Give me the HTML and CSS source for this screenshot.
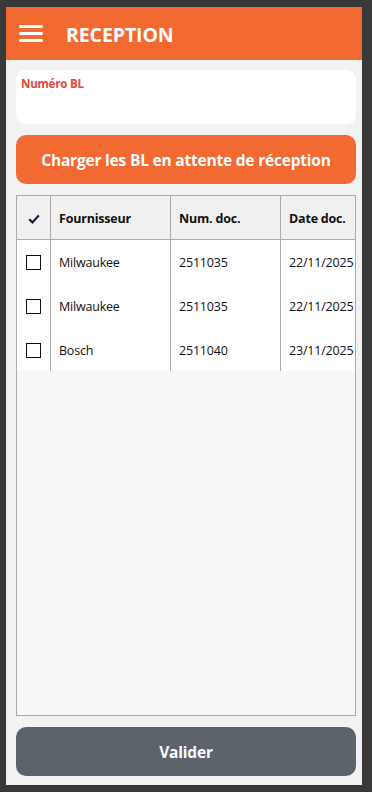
FILE: index.html
```html
<!DOCTYPE html>
<html lang="fr">
<head>
    <meta charset="UTF-8">
    <meta name="viewport" content="width=device-width, initial-scale=1.0">
    <title>Reception</title>
    <link rel="stylesheet" href="styles.css">
</head>
<body>
    <div class="app">
        <header class="topbar">
            <svg class="menu-icon" width="24" height="17" viewBox="0 0 24 17">
                <path d="M1.5 1.5h21M1.5 8.5h21M1.5 15.5h21" stroke="#fff" stroke-width="3" stroke-linecap="round"/>
            </svg>
            <h1>RECEPTION</h1>
        </header>

        <main class="content">
            <div class="field">
                <label for="numero-bl">Numéro BL</label>
                <input type="text" id="numero-bl" name="numero-bl">
            </div>

            <button class="btn btn-load" type="button">Charger les BL en attente de réception</button>

            <div class="grid-wrap">
                <table class="grid">
                    <thead>
                        <tr>
                            <th class="col-check">
                                <svg width="12" height="10" viewBox="0 0 12 10">
                                    <path d="M1.2 5.2l3.2 3.2L10.8 1.6" fill="none" stroke="#14213d" stroke-width="2.2"/>
                                </svg>
                            </th>
                            <th class="col-supplier">Fournisseur</th>
                            <th class="col-num">Num. doc.</th>
                            <th class="col-date">Date doc.</th>
                        </tr>
                    </thead>
                    <tbody>
                        <tr>
                            <td class="col-check"><span class="box"></span></td>
                            <td>Milwaukee</td>
                            <td>2511035</td>
                            <td>22/11/2025</td>
                        </tr>
                        <tr>
                            <td class="col-check"><span class="box"></span></td>
                            <td>Milwaukee</td>
                            <td>2511035</td>
                            <td>22/11/2025</td>
                        </tr>
                        <tr>
                            <td class="col-check"><span class="box"></span></td>
                            <td>Bosch</td>
                            <td>2511040</td>
                            <td>23/11/2025</td>
                        </tr>
                    </tbody>
                </table>
            </div>

            <button class="btn btn-validate" type="button">Valider</button>
        </main>
    </div>
</body>
</html>
```

FILE: styles.css
```css
html, body {
    margin: 0;
    height: 100%;
}
body {
    background-color: #393939;
    font-family: "Open Sans", "Noto Sans", sans-serif;
    padding: 7px 10px 7px 6px;
    box-sizing: border-box;
}
.app {
    width: 356px;
    height: 778px;
    background-color: #f2f2f2;
    display: flex;
    flex-direction: column;
}
.topbar {
    height: 53px;
    background-color: #f26a32;
    display: flex;
    align-items: center;
    padding-left: 13px;
    gap: 23px;
    flex-shrink: 0;
}
.menu-icon {
    display: block;
}
.topbar h1 {
    margin: 0;
    padding-top: 2px;
    color: #fff;
    font-size: 19.5px;
    font-weight: 700;
    letter-spacing: -0.1px;
}
.content {
    flex: 1;
    display: flex;
    flex-direction: column;
    padding: 10px 6px 9px 10px;
    gap: 11px;
    min-height: 0;
}
.field {
    background-color: #fff;
    border-radius: 9px;
    height: 54px;
    padding: 6px 5px 0;
    box-sizing: border-box;
    display: flex;
    flex-direction: column;
}
.field label {
    color: #e9483b;
    font-size: 11.5px;
    font-weight: 700;
    line-height: 15px;
    letter-spacing: -0.2px;
}
.field input {
    border: none;
    outline: none;
    background: transparent;
    font: inherit;
    font-size: 13px;
    padding: 4px 0;
}
.btn {
    display: block;
    width: 100%;
    height: 49px;
    border: none;
    border-radius: 10px;
    color: #fff;
    font-family: inherit;
    font-size: 15.5px;
    font-weight: 700;
    letter-spacing: -0.2px;
    padding-top: 2px;
    flex-shrink: 0;
}
.btn-load {
    background-color: #f26a32;
}
.btn-validate {
    background-color: #5c636a;
}
.grid-wrap {
    flex: 1;
    border: 1px solid #ababab;
    background-color: #f7f7f7;
    overflow: hidden;
}
.grid {
    border-collapse: collapse;
    table-layout: fixed;
    width: 390px;
    font-size: 12.5px;
    color: #111;
}
.grid th, .grid td {
    text-align: left;
    padding: 3px 8px 0;
    white-space: nowrap;
    border-left: 1px solid #ababab;
}
.grid th:first-child, .grid td:first-child {
    border-left: none;
}
.grid thead tr {
    height: 43px;
    background-color: #f0f0f0;
    border-bottom: 1px solid #ababab;
}
.grid th {
    font-weight: 700;
    letter-spacing: -0.2px;
}
.grid tbody tr {
    height: 44px;
    background-color: #fff;
}
.grid td {
    letter-spacing: -0.2px;
}
.grid .col-check {
    width: 33px;
    padding: 0;
    text-align: center;
}
.col-check svg {
    display: block;
    margin: 3px auto 0;
}
.col-supplier {
    width: 103px;
}
.col-num {
    width: 93px;
}
.col-date {
    width: 120px;
}
.box {
    display: block;
    width: 13px;
    height: 13px;
    border: 1.5px solid #111;
    margin: 2px auto 0 9px;
}
```
